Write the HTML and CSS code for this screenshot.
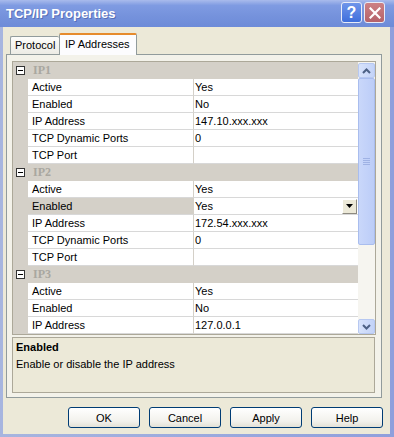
FILE: index.html
```html
<!DOCTYPE html>
<html lang="en">
<head>
<meta charset="UTF-8" />
<title>TCP/IP Properties</title>
<link rel="stylesheet" href="styles.css">
</head>
<body>
  <div class="fenetre">
    <div class="barre-titre">
      <span class="titre">TCP/IP Properties</span>
      <div class="boutons-titre">
        <span class="btn-titre btn-aide">?</span>
        <span class="btn-titre btn-fermer">
          <svg width="12" height="12" viewBox="0 0 12 12"><path d="M1.5 1.5 L10.5 10.5 M10.5 1.5 L1.5 10.5" stroke="#fff" stroke-width="2.2" stroke-linecap="square"/></svg>
        </span>
      </div>
    </div>

    <div class="corps">
      <div class="onglets">
        <span class="onglet">Protocol</span>
        <span class="onglet actif">IP Addresses</span>
      </div>

      <div class="panneau">
        <div class="grille">
          <div class="lignes">
            <div class="groupe"><span class="plier"></span><span class="nom-groupe">IP1</span></div>
            <div class="ligne"><span class="nom">Active</span><span class="valeur">Yes</span></div>
            <div class="ligne"><span class="nom">Enabled</span><span class="valeur">No</span></div>
            <div class="ligne"><span class="nom">IP Address</span><span class="valeur">147.10.xxx.xxx</span></div>
            <div class="ligne"><span class="nom">TCP Dynamic Ports</span><span class="valeur">0</span></div>
            <div class="ligne"><span class="nom">TCP Port</span><span class="valeur"></span></div>

            <div class="groupe"><span class="plier"></span><span class="nom-groupe">IP2</span></div>
            <div class="ligne"><span class="nom">Active</span><span class="valeur">Yes</span></div>
            <div class="ligne choisie"><span class="nom">Enabled</span><span class="valeur">Yes<span class="liste-btn"><svg width="7" height="4" viewBox="0 0 7 4"><path d="M0 0 H7 L3.5 4 Z" fill="#000"/></svg></span></span></div>
            <div class="ligne"><span class="nom">IP Address</span><span class="valeur">172.54.xxx.xxx</span></div>
            <div class="ligne"><span class="nom">TCP Dynamic Ports</span><span class="valeur">0</span></div>
            <div class="ligne"><span class="nom">TCP Port</span><span class="valeur"></span></div>

            <div class="groupe"><span class="plier"></span><span class="nom-groupe">IP3</span></div>
            <div class="ligne"><span class="nom">Active</span><span class="valeur">Yes</span></div>
            <div class="ligne"><span class="nom">Enabled</span><span class="valeur">No</span></div>
            <div class="ligne"><span class="nom">IP Address</span><span class="valeur">127.0.0.1</span></div>
          </div>

          <div class="defilement">
            <span class="fleche">
              <svg width="9" height="6" viewBox="0 0 9 6"><path d="M1 5 L4.5 1.5 L8 5" fill="none" stroke="#4d6185" stroke-width="2"/></svg>
            </span>
            <div class="piste">
              <div class="curseur"><span class="prise"></span></div>
            </div>
            <span class="fleche">
              <svg width="9" height="6" viewBox="0 0 9 6"><path d="M1 1 L4.5 4.5 L8 1" fill="none" stroke="#4d6185" stroke-width="2"/></svg>
            </span>
          </div>
        </div>

        <div class="description">
          <div class="desc-titre">Enabled</div>
          <div class="desc-texte">Enable or disable the IP address</div>
        </div>
      </div>

      <div class="actions">
        <button>OK</button>
        <button>Cancel</button>
        <button>Apply</button>
        <button>Help</button>
      </div>
    </div>
  </div>
</body>
</html>
```

FILE: styles.css
```css
:root {
  --beige: #ece9d8;
  --gris: #d4d0c8;
  --bord: #919b9c;
  --police: 'Liberation Sans', Arial, sans-serif;
}
body {
  margin: 0;
  width: 394px;
  height: 437px;
  overflow: hidden;
  background: #fff;
  font-family: var(--police);
  font-size: 11px;
  color: #000;
}
.fenetre {
  width: 394px;
  height: 437px;
  box-sizing: border-box;
  background: linear-gradient(90deg, #a7b5df, #8f9fdc);
  padding: 0 4px 3px 3px;
  display: flex;
  flex-direction: column;
}
.barre-titre {
  height: 27px;
  margin: 0 -4px 0 -3px;
  padding: 0 9px 0 6px;
  background: linear-gradient(180deg, #a9bbec 0%, #7f9be2 20%, #7592dc 60%, #6d8bd8 100%);
  display: flex;
  align-items: center;
  justify-content: space-between;
}
.titre {
  color: #fff;
  font-weight: 700;
  font-size: 13px;
  text-shadow: 1px 1px 0 #5870b8;
}
.boutons-titre {
  display: flex;
  gap: 2px;
  margin-top: -2px;
}
.btn-titre {
  width: 19px;
  height: 19px;
  border: 1px solid #e8ecf8;
  border-radius: 3px;
  display: flex;
  align-items: center;
  justify-content: center;
  color: #fff;
  font-weight: 700;
  font-size: 16px;
}
.btn-aide {
  background: linear-gradient(180deg, #6f95ea, #3f6fdc);
}
.btn-fermer {
  background: linear-gradient(180deg, #cd8185, #b5626a);
}
.corps {
  flex: 1;
  background: var(--beige);
  display: flex;
  flex-direction: column;
}
.onglets {
  height: 22px;
  margin-top: 5px;
  padding-left: 7px;
  display: flex;
  align-items: flex-end;
}
.onglet {
  height: 17px;
  padding: 0 4px;
  width: 40px;
  border: 1px solid var(--bord);
  border-bottom: none;
  border-right: none;
  background: linear-gradient(180deg, #fdfdfb, #ecebe5);
  line-height: 17px;
  border-radius: 2px 2px 0 0;
}
.onglet.actif {
  width: 68px;
  padding: 0 3px 0 5px;
  border-right: 1px solid var(--bord);
  border-top: 2px solid #e68b2c;
  background: #fcfcfe;
  line-height: 19px;
  height: 20px;
  margin-bottom: -1px;
  position: relative;
}
.panneau {
  margin-left: 3px;
  width: 376px;
  height: 344px;
  box-sizing: border-box;
  border: 1px solid var(--bord);
  background: #f3f2ea;
  padding: 6px 0 0 5px;
}
.grille {
  width: 364px;
  height: 274px;
  box-sizing: border-box;
  border: 1px solid #aca899;
  display: flex;
  background: #fff;
}
.lignes {
  width: 345px;
  overflow: hidden;
}
.groupe {
  height: 17px;
  background: var(--gris);
  display: flex;
  align-items: center;
}
.plier {
  width: 7px;
  height: 7px;
  margin-left: 3px;
  border: 1px solid #333;
  background: #fff;
  position: relative;
}
.plier::after {
  content: "";
  position: absolute;
  left: 1px;
  top: 3px;
  width: 5px;
  height: 1px;
  background: #000;
}
.nom-groupe {
  margin-left: 8px;
  font-family: 'Liberation Serif', serif;
  font-weight: 700;
  font-size: 12px;
  color: #a9a7a0;
}
.ligne {
  height: 17px;
  display: flex;
  background: var(--gris);
}
.nom, .valeur {
  height: 16px;
  line-height: 16px;
  background: #fff;
  border-bottom: 1px solid #d8d8d8;
  white-space: nowrap;
}
.nom {
  width: 161px;
  margin-left: 15px;
  padding-left: 4px;
  border-right: 1px solid #d4d0c8;
}
.valeur {
  flex: 1;
  padding-left: 1px;
  display: flex;
  justify-content: space-between;
  align-items: center;
}
.choisie .nom {
  background: var(--gris);
}
.liste-btn {
  width: 15px;
  height: 15px;
  box-sizing: border-box;
  margin-right: 1px;
  border: 1px solid #fff;
  border-right-color: #8d8a80;
  border-bottom-color: #8d8a80;
  background: #ece9d8;
  display: flex;
  align-items: center;
  justify-content: center;
}
.defilement {
  width: 17px;
  display: flex;
  flex-direction: column;
  background: #f6f5f0;
  padding-top: 1px;
}
.fleche {
  height: 15px;
  box-sizing: border-box;
  border: 1px solid #b7c8f1;
  border-radius: 2px;
  background: linear-gradient(90deg, #d8e3fb, #c3d3f8);
  display: flex;
  align-items: center;
  justify-content: center;
}
.piste {
  flex: 1;
}
.curseur {
  height: 167px;
  box-sizing: border-box;
  border: 1px solid #a9bdee;
  border-radius: 2px;
  background: linear-gradient(90deg, #c9d7fa, #bccdf8);
  display: flex;
  align-items: center;
  justify-content: center;
}
.prise {
  width: 7px;
  height: 7px;
  background: repeating-linear-gradient(180deg, #9fb2e4 0 1px, transparent 1px 2px);
}
.description {
  margin-top: 2px;
  width: 363px;
  height: 56px;
  box-sizing: border-box;
  border: 1px solid #aca899;
  background: var(--beige);
  padding: 2px 3px;
}
.desc-titre {
  font-weight: 700;
  height: 15px;
  line-height: 15px;
}
.desc-texte {
  margin-top: 2px;
  line-height: 15px;
}
.actions {
  display: flex;
  justify-content: flex-end;
  gap: 9px;
  padding: 9px 7px 0 0;
}
button {
  width: 72px;
  height: 21px;
  border: 1px solid #003c74;
  border-radius: 3px;
  background: linear-gradient(180deg, #ffffff, #f2f1ec 70%, #e3e1d6);
  font-family: var(--police);
  font-size: 11px;
  color: #000;
  padding: 0;
}
```
